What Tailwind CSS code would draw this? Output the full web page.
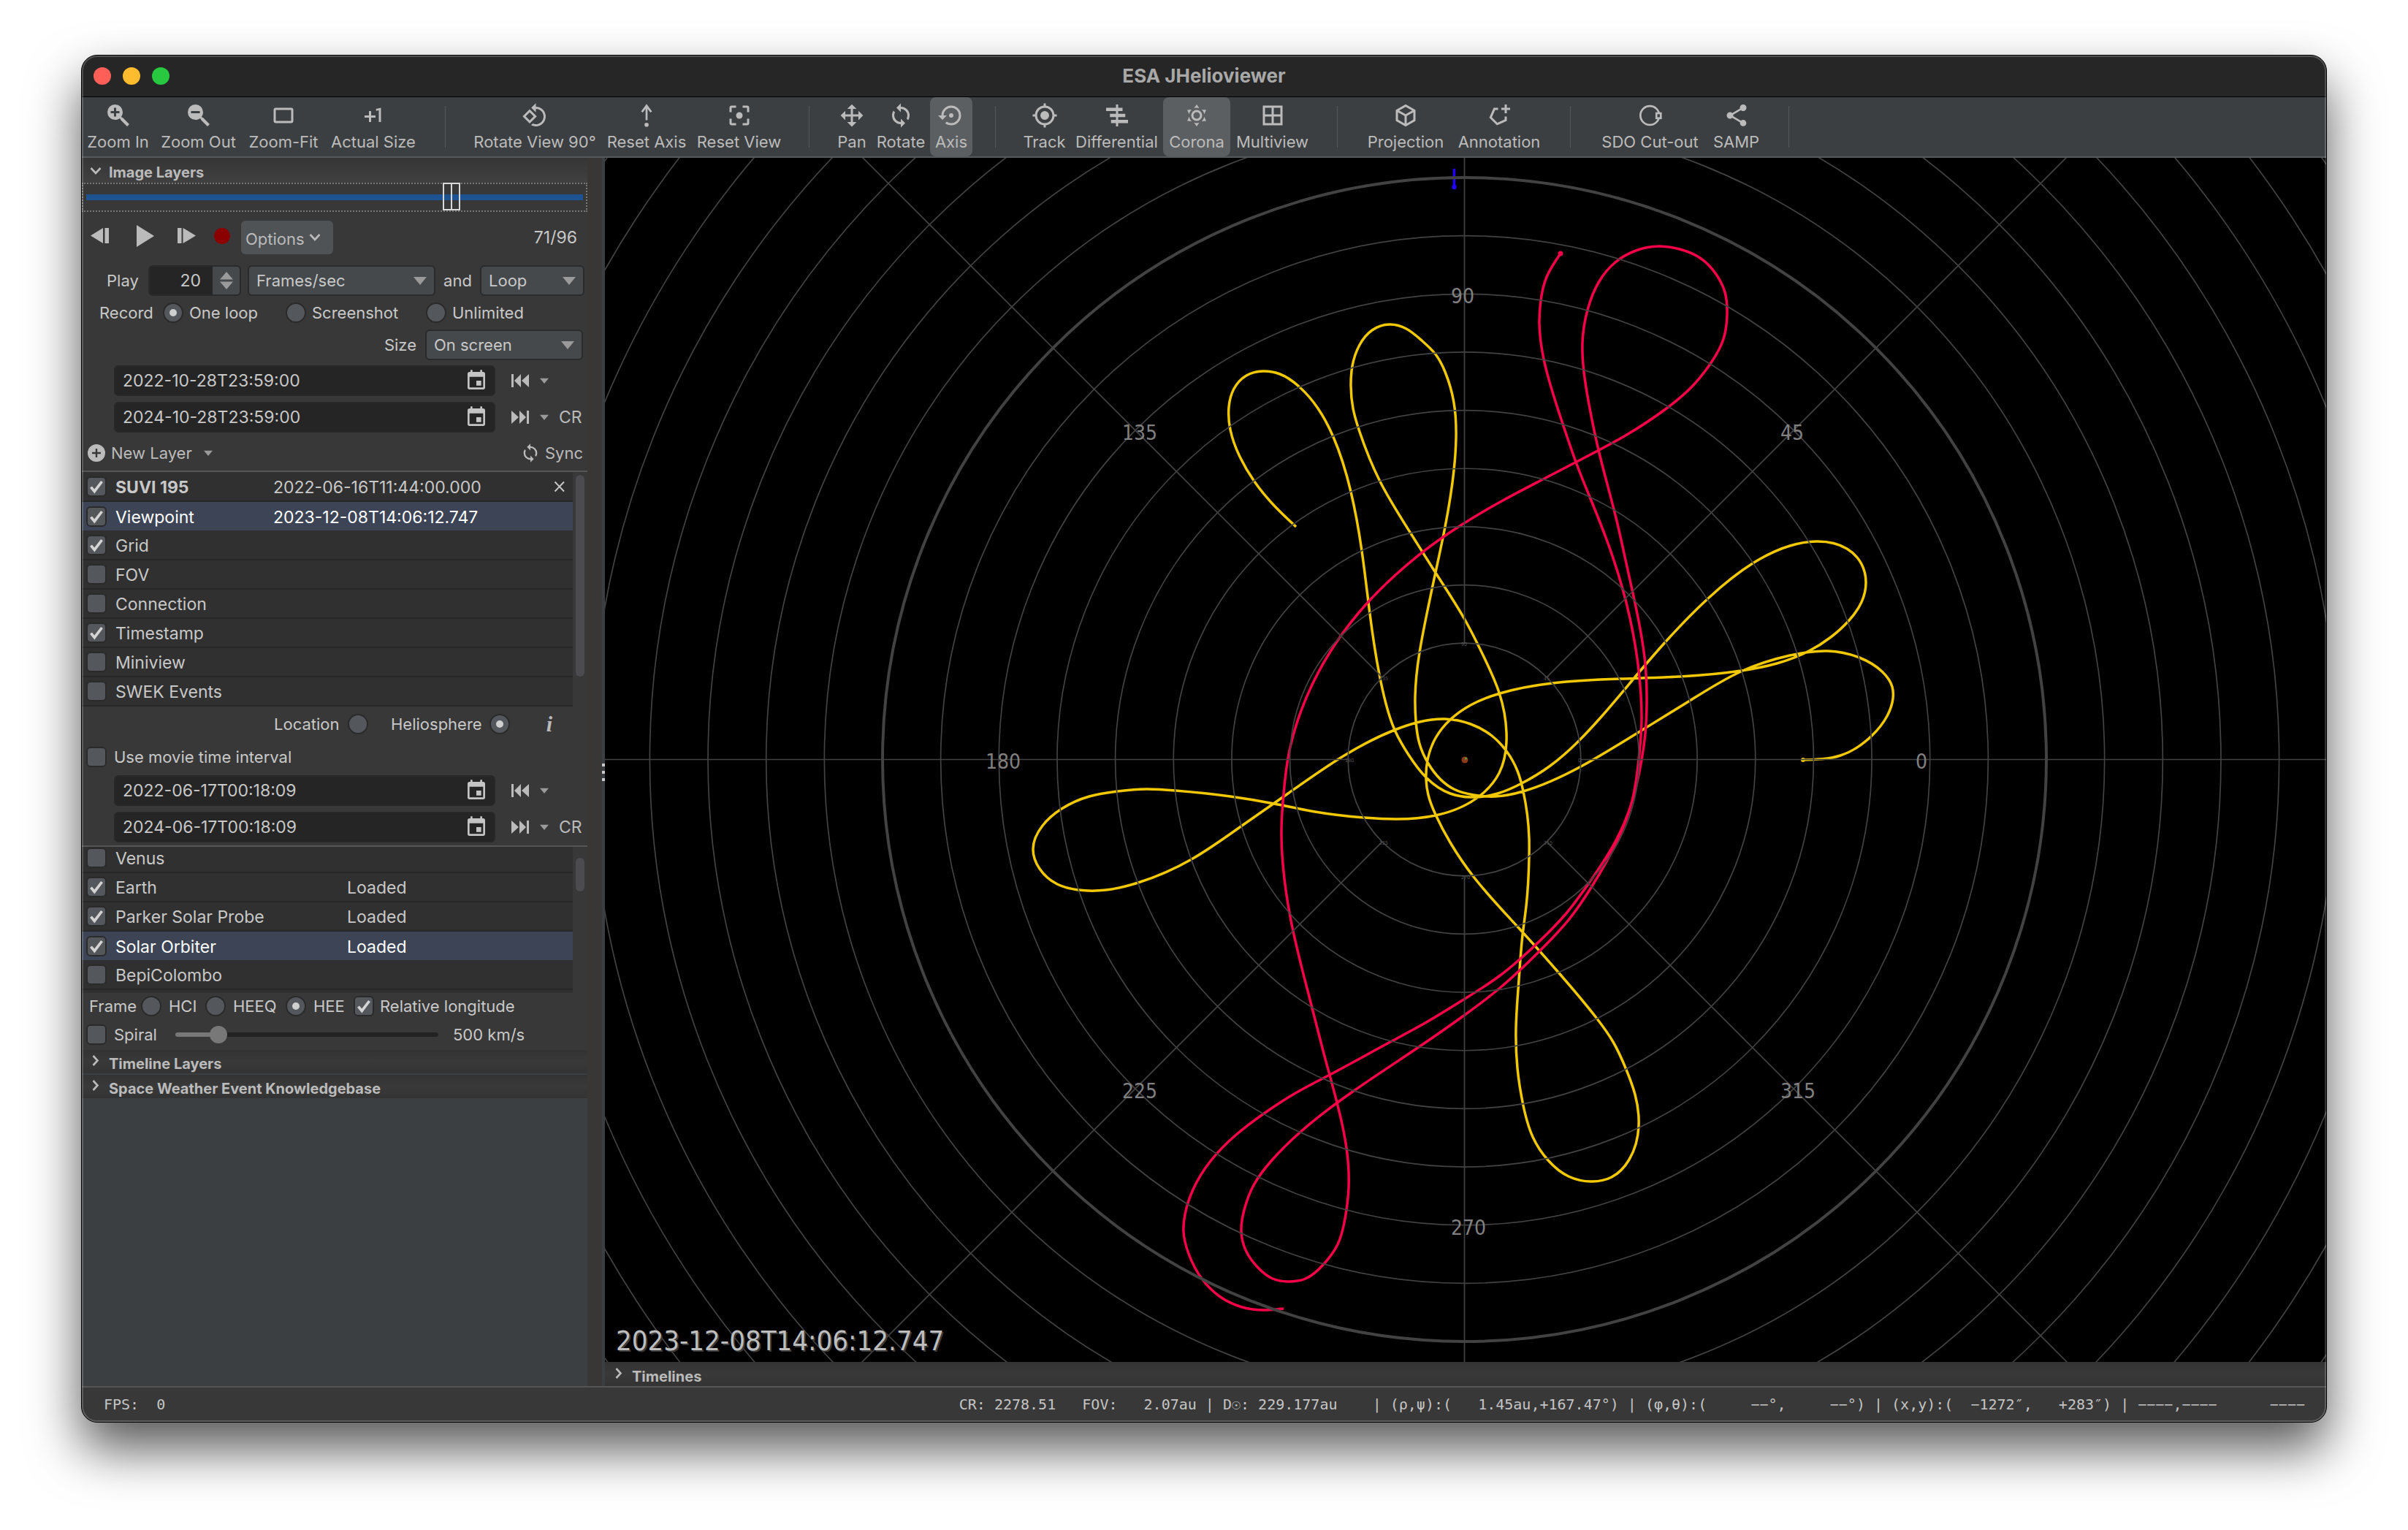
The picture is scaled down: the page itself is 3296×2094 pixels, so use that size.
<!DOCTYPE html>
<html lang="en">
<head>
<meta charset="utf-8">
<title>ESA JHelioviewer</title>
<script src="https://cdn.jsdelivr.net/npm/@tailwindcss/browser@4"></script>
</head>
<body class="flex h-screen flex-col bg-white px-[111px] pt-[75px] pb-[147px] font-['Inter','Liberation_Sans',sans-serif] text-[22px] leading-7 text-[#bbbbbb]">

<!-- shared symbols -->
<svg class="hidden" aria-hidden="true">
  <symbol id="check" viewBox="0 0 26 26"><path d="M6 13.5 L10.5 19 L20 6.5" fill="none" stroke="#d4d4d4" stroke-width="3.4"/></symbol>
  <symbol id="tri" viewBox="0 0 18 12"><path d="M0 1H18L9 12Z" fill="#9a9a9a"/></symbol>
  <symbol id="cal" viewBox="0 0 24 24"><path fill="#c4c4c4" d="M19,19H5V8H19M16,1V3H8V1H6V3H5C3.89,3 3,3.89 3,5V19A2,2 0 0,0 5,21H19A2,2 0 0,0 21,19V5C21,3.89 20.1,3 19,3H18V1M17,12H12V17H17V12Z"/></symbol>
  <symbol id="first" viewBox="0 0 24 20"><path fill="#bbbbbb" d="M0 1h3v18H0zM13 1v18L4 10zM24 1v18L14 10z"/></symbol>
  <symbol id="last" viewBox="0 0 24 20"><path fill="#bbbbbb" d="M21 1h3v18h-3zM11 1v18l9-9zM0 1v18l10-9z"/></symbol>
  <symbol id="sync" viewBox="0 0 24 24"><path fill="currentColor" d="M12,18A6,6 0 0,1 6,12C6,11 6.25,10.03 6.7,9.2L5.24,7.74C4.46,8.97 4,10.43 4,12A8,8 0 0,0 12,20V23L16,19L12,15M12,4V1L8,5L12,9V6A6,6 0 0,1 18,12C18,13 17.75,13.97 17.3,14.8L18.76,16.26C19.54,15.03 20,13.57 20,12A8,8 0 0,0 12,4Z"/></symbol>
  <symbol id="chev" viewBox="0 0 16 16"><path d="M4.500 1 L10.500 7.500 L4.500 14" fill="none" stroke="#bbbbbb" stroke-width="2.600"/></symbol>
  <symbol id="chevd" viewBox="0 0 16 16"><path d="M1.500 4 L8 11 L14.500 4" fill="none" stroke="#bbbbbb" stroke-width="2.600"/></symbol>
</svg>

<div class="relative flex min-h-0 flex-1 flex-col overflow-hidden rounded-[22px] border border-black bg-[#383838] shadow-[0_36px_70px_rgba(0,0,0,0.66)]">

  <!-- title bar -->
  <header class="relative flex h-[57px] shrink-0 items-center justify-center border-b border-black bg-[#262626]">
    <div class="absolute left-4 flex gap-4">
      <span class="size-6 rounded-full bg-[#ff5f57]"></span>
      <span class="size-6 rounded-full bg-[#febc2e]"></span>
      <span class="size-6 rounded-full bg-[#28c840]"></span>
    </div>
    <h1 class="text-[26px] font-bold text-[#a8a8a8]">ESA JHelioviewer</h1>
  </header>

  <!-- toolbar -->
  <nav class="flex h-[83px] shrink-0 items-stretch whitespace-nowrap border-b-2 border-[#555a5d] bg-[#3c3f41]">
    <button class="flex w-[99px] flex-col items-center pt-[7px]"><svg class="size-9" viewBox="0 0 24 24" fill="currentColor"><path d="M9,2A7,7 0 0,1 16,9C16,10.57 15.5,12 14.61,13.19L15.41,14H16L22,20L20,22L14,16V15.41L13.19,14.61C12,15.5 10.57,16 9,16A7,7 0 0,1 2,9A7,7 0 0,1 9,2M8,5V8H5V10H8V13H10V10H13V8H10V5H8Z"/></svg><span class="mt-1">Zoom In</span></button>
    <button class="flex w-[121px] flex-col items-center pt-[7px]"><svg class="size-9" viewBox="0 0 24 24" fill="currentColor"><path d="M9,2A7,7 0 0,1 16,9C16,10.57 15.5,12 14.61,13.19L15.41,14H16L22,20L20,22L14,16V15.41L13.19,14.61C12,15.5 10.57,16 9,16A7,7 0 0,1 2,9A7,7 0 0,1 9,2M5,8V10H13V8H5Z"/></svg><span class="mt-1">Zoom Out</span></button>
    <button class="flex w-[112px] flex-col items-center pt-[7px]"><svg class="size-9" viewBox="0 0 24 24" fill="none" stroke="currentColor" stroke-width="2"><rect x="4" y="6" width="16" height="12" rx="1"/></svg><span class="mt-1">Zoom-Fit</span></button>
    <button class="flex w-[134px] flex-col items-center pt-[7px]"><svg class="size-9" viewBox="0 0 24 24" fill="currentColor"><path d="M10,8V12H14V14H10V18H8V14H4V12H8V8H10M14.5,6.080V7.9L17,7.4V18H19V5L14.5,6.080Z"/></svg><span class="mt-1">Actual Size</span></button>
    <span class="mx-[31px] my-3 w-px bg-[#55585a]"></span>
    <button class="flex w-[182px] flex-col items-center pt-[7px]"><svg class="size-9" viewBox="0 0 24 24" fill="currentColor"><path d="M7.34 6.41L.86 12.9l6.49 6.48 6.49-6.48-6.5-6.49zM3.69 12.9l3.66-3.66L11 12.9l-3.66 3.66-3.65-3.66zm15.67-6.26C17.61 4.88 15.3 4 13 4V.76L8.76 5 13 9.24V6c1.79 0 3.58.68 4.95 2.05 2.73 2.73 2.73 7.17 0 9.9C16.58 19.32 14.79 20 13 20c-.97 0-1.94-.21-2.84-.61l-1.49 1.49C10.02 21.62 11.51 22 13 22c2.3 0 4.61-.88 6.36-2.64 3.52-3.51 3.52-9.21 0-12.72z"/></svg><span class="mt-1">Rotate View 90°</span></button>
    <button class="flex w-[124px] flex-col items-center pt-[7px]"><svg class="size-9" viewBox="0 0 24 24" fill="currentColor"><path d="M12 1.500 L17 8.300 L15.500 9.400 L12.900 6 V16.300 H11.100 V6 L8.500 9.400 L7 8.300Z"/><circle cx="12" cy="20.500" r="1.900"/></svg><span class="mt-1">Reset Axis</span></button>
    <button class="flex w-[129px] flex-col items-center pt-[7px]"><svg class="size-9" viewBox="0 0 24 24" fill="currentColor"><path d="M5,15H3V19A2,2 0 0,0 5,21H9V19H5M5,5H9V3H5A2,2 0 0,0 3,5V9H5M19,3H15V5H19V9H21V5A2,2 0 0,0 19,3M19,19H15V21H19A2,2 0 0,0 21,19V15H19"/><circle cx="12" cy="12" r="3"/></svg><span class="mt-1">Reset View</span></button>
    <span class="mx-[31px] my-3 w-px bg-[#55585a]"></span>
    <button class="flex w-[54px] flex-col items-center pt-[7px]"><svg class="size-9" viewBox="0 0 24 24" fill="currentColor"><path d="M13,6V11H18V7.75L22.25,12L18,16.25V13H13V18H16.25L12,22.25L7.75,18H11V13H6V16.25L1.75,12L6,7.75V11H11V6H7.75L12,1.75L16.25,6H13Z"/></svg><span class="mt-1">Pan</span></button>
    <button class="flex w-20 flex-col items-center pt-[7px]"><svg class="size-9"><use href="#sync"/></svg><span class="mt-1">Rotate</span></button>
    <button class="flex w-[58px] flex-col items-center rounded-lg bg-[#5c5f61] pt-[7px]"><svg class="size-9" viewBox="0 0 24 24" fill="currentColor"><path d="M12,3A9,9 0 0,0 3,12H0L4,16L8,12H5A7,7 0 0,1 12,5A7,7 0 0,1 19,12A7,7 0 0,1 12,19C10.5,19 9.09,18.5 7.94,17.7L6.5,19.14C8.04,20.3 9.94,21 12,21A9,9 0 0,0 21,12A9,9 0 0,0 12,3M14,12A2,2 0 0,0 12,10A2,2 0 0,0 10,12A2,2 0 0,0 12,14A2,2 0 0,0 14,12Z"/></svg><span class="mt-1">Axis</span></button>
    <span class="mx-[31px] my-3 w-px bg-[#55585a]"></span>
    <button class="flex w-[71px] flex-col items-center pt-[7px]"><svg class="size-9" viewBox="0 0 24 24" fill="currentColor"><path d="M12,8A4,4 0 0,1 16,12A4,4 0 0,1 12,16A4,4 0 0,1 8,12A4,4 0 0,1 12,8M3.05,13H1V11H3.05C3.5,6.83 6.83,3.5 11,3.05V1H13V3.05C17.17,3.5 20.5,6.83 20.95,11H23V13H20.95C20.5,17.17 17.17,20.5 13,20.95V23H11V20.95C6.83,20.5 3.5,17.17 3.05,13M12,5A7,7 0 0,0 5,12A7,7 0 0,0 12,19A7,7 0 0,0 19,12A7,7 0 0,0 12,5Z"/></svg><span class="mt-1">Track</span></button>
    <button class="flex w-[127px] flex-col items-center pt-[7px]"><svg class="size-9" viewBox="0 0 24 24" fill="currentColor"><path d="M2 5h15v3H2zM5.500 10.500h14v3h-14zM6.500 16h15.500v3H6.500zM11 2h2v20h-2z"/></svg><span class="mt-1">Differential</span></button>
    <button class="flex w-[92px] flex-col items-center rounded-lg bg-[#5c5f61] pt-[7px]"><svg class="size-9" viewBox="0 0 24 24" fill="currentColor"><path d="M12,7A5,5 0 0,1 17,12A5,5 0 0,1 12,17A5,5 0 0,1 7,12A5,5 0 0,1 12,7M12,9A3,3 0 0,0 9,12A3,3 0 0,0 12,15A3,3 0 0,0 15,12A3,3 0 0,0 12,9M12,2L14.39,5.42C13.65,5.15 12.84,5 12,5C11.16,5 10.35,5.15 9.61,5.42L12,2M3.34,7L7.5,6.65C6.9,7.16 6.36,7.78 5.94,8.5C5.5,9.24 5.25,10 5.11,10.79L3.34,7M3.36,17L5.12,13.23C5.26,14 5.53,14.78 5.95,15.5C6.37,16.24 6.91,16.86 7.5,17.37L3.36,17M20.65,7L18.88,10.79C18.74,10 18.47,9.23 18.05,8.5C17.63,7.78 17.1,7.15 16.5,6.64L20.65,7M20.64,17L16.5,17.36C17.09,16.85 17.62,16.22 18.04,15.5C18.46,14.77 18.73,14 18.87,13.21L20.64,17M12,22L9.59,18.56C10.33,18.83 11.14,19 12,19C12.82,19 13.63,18.83 14.37,18.56L12,22Z"/></svg><span class="mt-1">Corona</span></button>
    <button class="flex w-[115px] flex-col items-center pt-[7px]"><svg class="size-9" viewBox="0 0 24 24" fill="none" stroke="currentColor" stroke-width="2"><path d="M4 4H20V20H4ZM12 4V20M4 12H20"/></svg><span class="mt-1">Multiview</span></button>
    <span class="mx-[31px] my-3 w-px bg-[#55585a]"></span>
    <button class="flex w-[124px] flex-col items-center pt-[7px]"><svg class="size-9" viewBox="0 0 24 24" fill="currentColor"><path d="M21,16.5C21,16.88 20.79,17.21 20.47,17.38L12.57,21.82C12.41,21.94 12.21,22 12,22C11.79,22 11.59,21.94 11.43,21.82L3.53,17.38C3.21,17.21 3,16.88 3,16.5V7.5C3,7.12 3.21,6.79 3.53,6.62L11.43,2.18C11.59,2.06 11.79,2 12,2C12.21,2 12.41,2.06 12.57,2.18L20.47,6.62C20.79,6.79 21,7.12 21,7.5V16.5M12,4.15L6.04,7.5L12,10.85L17.96,7.5L12,4.15M5,15.91L11,19.29V12.58L5,9.21V15.91M19,15.91V9.21L13,12.58V19.29L19,15.91Z"/></svg><span class="mt-1">Projection</span></button>
    <button class="flex w-[132px] flex-col items-center pt-[7px]"><svg class="size-9" viewBox="0 0 24 24" fill="currentColor"><path d="M17,15.7V13H19V17L10,21L3,14L7,5H11V7H8.3L5.4,13.6L10.4,18.6L17,15.7M22,5V7H19V10H17V7H14V5H17V2H19V5H22Z"/></svg><span class="mt-1">Annotation</span></button>
    <span class="mx-[31px] my-3 w-px bg-[#55585a]"></span>
    <button class="flex w-[155px] flex-col items-center pt-[7px]"><svg class="size-9" viewBox="0 0 24 24" fill="none" stroke="currentColor" stroke-width="1.800"><circle cx="11.500" cy="12" r="8.600"/><rect x="17.500" y="10" width="4" height="4.500" fill="#3c3f41"/></svg><span class="mt-1">SDO Cut-out</span></button>
    <button class="flex w-[81px] flex-col items-center pt-[7px]"><svg class="size-9" viewBox="0 0 24 24" fill="currentColor"><path d="M18,16.08C17.24,16.08 16.56,16.38 16.04,16.85L8.91,12.7C8.96,12.47 9,12.24 9,12C9,11.76 8.96,11.53 8.91,11.3L15.96,7.19C16.5,7.69 17.21,8 18,8A3,3 0 0,0 21,5A3,3 0 0,0 18,2A3,3 0 0,0 15,5C15,5.24 15.04,5.47 15.09,5.7L8.04,9.81C7.5,9.31 6.79,9 6,9A3,3 0 0,0 3,12A3,3 0 0,0 6,15C6.79,15 7.5,14.69 8.04,14.19L15.16,18.34C15.11,18.55 15.08,18.77 15.08,19C15.08,20.61 16.39,21.91 18,21.91C19.61,21.91 20.92,20.61 20.92,19A2.92,2.92 0 0,0 18,16.08Z"/></svg><span class="mt-1">SAMP</span></button>
    <span class="mx-[31px] my-3 w-px bg-[#55585a]"></span>
  </nav>

  <main class="flex min-h-0 flex-1">

    <!-- control panel -->
    <aside class="flex w-[692px] shrink-0 flex-col bg-[#3c3f41] text-[#c8c8c8]">
      <div class="bg-[#383838]">
        <h2 class="flex h-[34px] items-center bg-linear-to-b from-[#363636] to-[#404040] pt-1.5 text-[20px] font-bold text-[#bbbbbb]"><svg class="mb-1 ml-[11px] size-4"><use href="#chevd"/></svg><button class="ml-2.5">Image Layers</button></h2>

        <div class="relative flex h-10 items-center border-2 border-dotted border-[#777] px-1">
          <span class="h-2 w-full bg-[#1d5391]"></span>
          <span class="absolute -top-0.5 left-[71.500%] flex h-[38px] w-6 justify-center border-2 border-[#d8d8d8]"><span class="w-0.5 bg-[#d8d8d8]"></span></span>
        </div>

        <div class="flex h-[70px] items-center">
          <button aria-label="Previous frame" class="mb-1 ml-3"><svg class="h-6 w-[26px]" viewBox="0 0 26 24" fill="#bbbbbb"><path d="M17 1v21L0 11.500zM19.500 1H25v21h-5.500z"/></svg></button>
          <button aria-label="Play" class="mb-1 ml-[37px]"><svg class="h-8 w-6" viewBox="0 0 24 32" fill="#bbbbbb"><path d="M0 1V31L24 16z"/></svg></button>
          <button aria-label="Next frame" class="mb-1 ml-8"><svg class="h-6 w-[26px]" viewBox="0 0 26 24" fill="#bbbbbb"><path d="M7.500 1v21L25 11.500zM0 1h5.500v21H0z"/></svg></button>
          <button aria-label="Record" class="mb-1 ml-6 size-[22px] rounded-full bg-[#8b0000]"></button>
          <button class="ml-[15px] flex h-[46px] w-[126px] items-center gap-1.5 rounded-md bg-[#4f5356] pl-1.5 text-[#bbbbbb]"><span class="pt-1">Options</span><svg class="size-4"><use href="#chevd"/></svg></button>
          <span class="ml-auto mr-3.5 text-[23px]">71/96</span>
        </div>

        <div class="flex h-12 items-center">
          <label for="speed" class="w-[91px] pl-[34px]">Play</label>
          <div class="flex h-[42px] w-[127px] overflow-hidden rounded-md border-2 border-[#2a2a2a] bg-[#252525]">
            <input id="speed" value="20" class="w-[86px] bg-[#252525] pr-4 text-right text-[23px]">
            <span class="flex flex-1 items-center justify-center bg-[#45494b]"><svg class="h-6 w-[18px]" viewBox="0 0 18 24" fill="#9a9a9a"><path d="M9 0L18 10.500H0zM0 13.500H18L9 24z"/></svg></span>
          </div>
          <div class="ml-[9px] grid w-[257px] items-center"><select aria-label="Play unit" class="col-start-1 row-start-1 h-[42px] appearance-none rounded-md border-2 border-[#2a2a2a] bg-[#45494b] pl-2.5"><option>Frames/sec</option></select><svg class="col-start-1 row-start-1 mr-3 h-3 w-[18px] justify-self-end"><use href="#tri"/></svg></div>
          <span class="w-[61px] text-center">and</span>
          <div class="grid w-[143px] items-center"><select aria-label="Play mode" class="col-start-1 row-start-1 h-[42px] appearance-none rounded-md border-2 border-[#2a2a2a] bg-[#45494b] pl-2.5"><option>Loop</option></select><svg class="col-start-1 row-start-1 mr-3 h-3 w-[18px] justify-self-end"><use href="#tri"/></svg></div>
        </div>

        <div class="flex h-10 items-center">
          <span class="w-[111px] pl-6">Record</span>
          <label class="flex w-[168px] items-center gap-2"><input type="radio" name="rec" checked class="grid size-7 appearance-none place-items-center rounded-full border-2 border-[#2a2a2a] bg-[#54585d] checked:before:size-2.5 checked:before:rounded-full checked:before:bg-[#cfcfcf]">One loop</label>
          <label class="flex w-48 items-center gap-2"><input type="radio" name="rec" class="size-7 appearance-none rounded-full border-2 border-[#2a2a2a] bg-[#54585d]">Screenshot</label>
          <label class="flex items-center gap-2"><input type="radio" name="rec" class="size-7 appearance-none rounded-full border-2 border-[#2a2a2a] bg-[#54585d]">Unlimited</label>
        </div>

        <div class="flex h-12 items-center justify-end pr-1.5">
          <label for="size" class="pr-3">Size</label>
          <div class="grid w-[216px] items-center"><select id="size" class="col-start-1 row-start-1 h-[42px] appearance-none rounded-md border-2 border-[#2a2a2a] bg-[#45494b] pl-2.5"><option>On screen</option></select><svg class="col-start-1 row-start-1 mr-3 h-3 w-[18px] justify-self-end"><use href="#tri"/></svg></div>
        </div>

        <div class="flex h-[50px] items-center pl-11">
          <div class="flex h-[42px] w-[522px] items-center rounded-md border-2 border-[#282828] bg-[#252525] pr-2 pl-2.5"><input aria-label="Start time" value="2022-10-28T23:59:00" class="min-w-0 flex-1 bg-[#252525] text-[23px]"><svg class="size-8"><use href="#cal"/></svg></div>
          <button aria-label="Earlier" class="ml-[22px] flex items-center gap-[15px]"><svg class="h-5 w-6"><use href="#first"/></svg><svg class="h-2 w-3"><use href="#tri"/></svg></button>
        </div>
        <div class="flex h-[50px] items-center pl-11">
          <div class="flex h-[42px] w-[522px] items-center rounded-md border-2 border-[#282828] bg-[#252525] pr-2 pl-2.5"><input aria-label="End time" value="2024-10-28T23:59:00" class="min-w-0 flex-1 bg-[#252525] text-[23px]"><svg class="size-8"><use href="#cal"/></svg></div>
          <button aria-label="Later" class="ml-[22px] flex items-center gap-[15px]"><svg class="h-5 w-6"><use href="#last"/></svg><svg class="h-2 w-3"><use href="#tri"/></svg></button>
          <button class="ml-3.5 text-[23px] text-[#bbbbbb]">CR</button>
        </div>

        <div class="flex h-[50px] items-center border-b-2 border-[#555555] pr-1.5 pl-2 text-[#bbbbbb]">
          <button class="flex items-center gap-2"><svg class="size-6" viewBox="0 0 24 24"><circle cx="12" cy="12" r="12" fill="#bbbbbb"/><path d="M6 12h12M12 6v12" stroke="#383838" stroke-width="2.400"/></svg>New Layer<svg class="ml-2 h-2 w-3"><use href="#tri"/></svg></button>
          <button class="ml-auto flex items-center gap-1.5"><svg class="size-7"><use href="#sync"/></svg>Sync</button>
        </div>

        <!-- image layers -->
        <div class="flex">
          <table class="w-[672px] table-fixed bg-[#303030]">
            <colgroup><col class="w-[46px]"><col class="w-[216px]"><col><col class="w-9"></colgroup>
            <tbody id="layers"></tbody>
          </table>
          <span class="mt-1 ml-1 h-[276px] w-3 rounded-full bg-[#4b4b50]"></span>
        </div>

        <div class="flex h-12 items-center pl-[263px]">
          <label class="flex w-40 items-center gap-3">Location<input type="radio" name="vp" class="size-7 appearance-none rounded-full border-2 border-[#2a2a2a] bg-[#54585d]"></label>
          <label class="flex items-center gap-2.5">Heliosphere<input type="radio" name="vp" checked class="grid size-7 appearance-none place-items-center rounded-full border-2 border-[#2a2a2a] bg-[#54585d] checked:before:size-2.5 checked:before:rounded-full checked:before:bg-[#cfcfcf]"></label>
          <button aria-label="Info" class="ml-[50px] font-['Liberation_Serif',serif] text-[30px] font-bold italic text-[#bbbbbb]">i</button>
        </div>

        <label class="flex h-[42px] items-center pl-1.5"><input type="checkbox" class="size-7 appearance-none rounded-md border-2 border-[#2a2a2a] bg-[#54585d]"><span class="ml-2.5">Use movie time interval</span></label>

        <div class="flex h-[50px] items-center pl-11">
          <div class="flex h-[42px] w-[522px] items-center rounded-md border-2 border-[#282828] bg-[#252525] pr-2 pl-2.5"><input aria-label="Viewpoint start" value="2022-06-17T00:18:09" class="min-w-0 flex-1 bg-[#252525] text-[23px]"><svg class="size-8"><use href="#cal"/></svg></div>
          <button aria-label="Earlier" class="ml-[22px] flex items-center gap-[15px]"><svg class="h-5 w-6"><use href="#first"/></svg><svg class="h-2 w-3"><use href="#tri"/></svg></button>
        </div>
        <div class="flex h-[52px] items-center border-b-2 border-[#555555] pl-11">
          <div class="flex h-[42px] w-[522px] items-center rounded-md border-2 border-[#282828] bg-[#252525] pr-2 pl-2.5"><input aria-label="Viewpoint end" value="2024-06-17T00:18:09" class="min-w-0 flex-1 bg-[#252525] text-[23px]"><svg class="size-8"><use href="#cal"/></svg></div>
          <button aria-label="Later" class="ml-[22px] flex items-center gap-[15px]"><svg class="h-5 w-6"><use href="#last"/></svg><svg class="h-2 w-3"><use href="#tri"/></svg></button>
          <button class="ml-3.5 text-[23px] text-[#bbbbbb]">CR</button>
        </div>

        <!-- objects, scrolled slightly past the first row -->
        <div class="flex h-[200px] overflow-hidden">
          <div class="flex h-[200px] w-[672px] flex-col justify-end overflow-hidden bg-[#303030] pb-1">
            <table class="w-full table-fixed">
              <colgroup><col class="w-[46px]"><col class="w-[317px]"><col><col class="w-9"></colgroup>
              <tbody id="objects"></tbody>
            </table>
          </div>
          <span class="mt-[15px] ml-1 h-[46px] w-3 rounded-full bg-[#4b4b50]"></span>
        </div>

        <div class="flex h-9 items-center pl-2.5">
          <span class="w-[71px]">Frame</span>
          <label class="flex w-22 items-center gap-2.5"><input type="radio" name="frame" class="size-7 appearance-none rounded-full border-2 border-[#2a2a2a] bg-[#54585d]">HCI</label>
          <label class="flex w-[110px] items-center gap-2.5"><input type="radio" name="frame" class="size-7 appearance-none rounded-full border-2 border-[#2a2a2a] bg-[#54585d]">HEEQ</label>
          <label class="flex w-[93px] items-center gap-2.5"><input type="radio" name="frame" checked class="grid size-7 appearance-none place-items-center rounded-full border-2 border-[#2a2a2a] bg-[#54585d] checked:before:size-2.5 checked:before:rounded-full checked:before:bg-[#cfcfcf]">HEE</label>
          <label class="flex items-center gap-2"><span class="grid"><input type="checkbox" checked class="col-start-1 row-start-1 size-7 appearance-none rounded-md border-2 border-[#2a2a2a] bg-[#54585d]"><svg class="col-start-1 row-start-1 size-7"><use href="#check"/></svg></span>Relative longitude</label>
        </div>

        <div class="flex h-[42px] items-center pl-1.5">
          <label class="flex w-[122px] items-center gap-2.5"><input type="checkbox" class="size-7 appearance-none rounded-md border-2 border-[#2a2a2a] bg-[#54585d]">Spiral</label>
          <input type="range" aria-label="Wind speed" min="0" max="100" value="14" class="h-1.5 w-[360px] appearance-none rounded-full bg-linear-to-r from-[#777777] from-[60px] to-[#222222] to-[60px] [&::-webkit-slider-thumb]:size-6 [&::-webkit-slider-thumb]:appearance-none [&::-webkit-slider-thumb]:rounded-full [&::-webkit-slider-thumb]:bg-[#777877]">
          <span class="ml-5">500 km/s</span>
        </div>

        <h2 class="flex h-[34px] items-center border-b-2 border-[#3c3f41] bg-linear-to-b from-[#333333] via-[#393939] to-[#333333] pt-1.5 text-[20px] font-bold text-[#bbbbbb]"><svg class="mb-2 ml-[11px] size-4"><use href="#chev"/></svg><button class="ml-2.5">Timeline Layers</button></h2>
        <h2 class="flex h-8 items-center bg-linear-to-b from-[#333333] via-[#393939] to-[#333333] pt-1.5 text-[20px] font-bold text-[#bbbbbb]"><svg class="mb-2 ml-[11px] size-4"><use href="#chev"/></svg><button class="ml-2.5">Space Weather Event Knowledgebase</button></h2>
      </div>
    </aside>

    <!-- splitter -->
    <div class="flex w-6 shrink-0 flex-col items-end justify-center gap-1.5 border-r-4 border-[#3c3f41] bg-[#383736]">
      <span class="-mr-1 size-1 bg-[#c8c8c8]"></span>
      <span class="-mr-1 size-1 bg-[#c8c8c8]"></span>
      <span class="-mr-1 size-1 bg-[#c8c8c8]"></span>
    </div>

    <!-- orbit view -->
    <section class="flex min-w-0 flex-1 flex-col">
      <svg class="min-h-0 w-full flex-1 bg-black" viewBox="828 216 2356 1648" preserveAspectRatio="xMidYMid slice" role="img" aria-label="Heliosphere view">
        <g fill="none" stroke-width="3.500" stroke-linejoin="round">
          <path id="parker" stroke="#f2c800"/>
          <path id="orbiter" stroke="#f50049"/>
        </g>
        <circle cx="2136" cy="347" r="3.500" fill="#f50049"/>
        <circle cx="2468" cy="1040" r="3" fill="#f2c800"/>
        <g stroke="#2000ff" fill="#2000ff" stroke-width="3.500"><path d="M1990.500 231V256"/><circle cx="1990.500" cy="256" r="1.500"/></g>
        <circle cx="2005" cy="1040" r="4.500" fill="#8a3a18"/><circle cx="2006.500" cy="1038" r="1.600" fill="#5f9a3a"/>
        <g id="grid" fill="none" stroke="#424242" stroke-width="1.700"></g>
        <g id="marks" text-anchor="middle" class="font-['DejaVu_Sans_Condensed','DejaVu_Sans',sans-serif]" fill="#808080"></g>
        <text x="845" y="1850" class="font-['DejaVu_Sans_Condensed','DejaVu_Sans',sans-serif] text-[38px]" fill="#3a3a3a">2023-12-08T14:06:12.747</text>
        <text x="843" y="1848" class="font-['DejaVu_Sans_Condensed','DejaVu_Sans',sans-serif] text-[38px]" fill="#bdbdbd">2023-12-08T14:06:12.747</text>
      </svg>
      <h2 class="flex h-[33px] shrink-0 items-center bg-linear-to-b from-[#333333] via-[#393939] to-[#333333] pt-1.5 text-[20px] font-bold text-[#bbbbbb]"><svg class="mb-2 ml-[11px] size-4"><use href="#chev"/></svg><button class="ml-2.5">Timelines</button></h2>
    </section>
  </main>

  <footer class="flex h-[49px] shrink-0 items-center justify-between whitespace-pre border-t-2 border-[#555555] bg-[#383838] pr-[29px] pb-0.5 pl-[30px] font-['DejaVu_Sans_Mono',monospace] text-[20px] text-[#c4c4c4]"><span>FPS:  0</span><span>CR: 2278.51   FOV:   2.07au | D☉: 229.177au    | (ρ,ψ):(   1.45au,+167.47°) | (φ,θ):(     −−°,     −−°) | (x,y):(  −1272″,   +283″) | −−−−,−−−−      −−−−</span></footer>

  <!-- light rim of the window -->
  <div class="pointer-events-none absolute inset-0 rounded-[21px] border-2 border-white/20"></div>
</div>

<script>
const row = (name, on, value, opts = {}) => `
<tr class="h-10 ${opts.sel ? 'bg-[#3d4456] text-white' : 'border-b-2 border-[#272727]'}">
  <td class="p-0 pl-1.5"><span class="grid"><input type="checkbox" aria-label="${name}" ${on ? 'checked' : ''} class="col-start-1 row-start-1 size-7 appearance-none rounded-md border-2 border-[#2a2a2a] ${opts.sel ? 'bg-[#54575a]' : 'bg-[#54585d]'}">${on ? '<svg class="col-start-1 row-start-1 size-7"><use href="#check"/></svg>' : ''}</span></td>
  <td class="p-0 pt-0.5 text-[23px] ${opts.bold ? 'font-bold' : ''}">${name}</td>
  <td class="p-0 pt-0.5 text-[23px]">${value || ''}</td>
  <td class="p-0">${opts.close ? '<button aria-label="Remove layer" class="block"><svg class="ml-2.5 size-4" viewBox="0 0 16 16"><path d="M1.500 1.500L14 14.500M14 1.500L1.500 14.500" stroke="#c8c8c8" stroke-width="2"/></svg></button>' : ''}</td>
</tr>`;
document.getElementById('layers').innerHTML =
  row('SUVI 195', 1, '2022-06-16T11:44:00.000', {bold: 1, close: 1}) +
  row('Viewpoint', 1, '2023-12-08T14:06:12.747', {sel: 1}) +
  row('Grid', 1) + row('FOV', 0) + row('Connection', 0) + row('Timestamp', 1) + row('Miniview', 0) + row('SWEK Events', 0);
document.getElementById('objects').innerHTML =
  row('Venus', 0) + row('Earth', 1, 'Loaded') + row('Parker Solar Probe', 1, 'Loaded') + row('Solar Orbiter', 1, 'Loaded', {sel: 1}) + row('BepiColombo', 0);

// natural cubic spline, chord-length parametrised, through a flat list of x,y pairs
function spline(text) {
  const p = text.trim().split(/\s+/).map(s => s.split(',').map(Number)), n = p.length - 1;
  const h = [];
  for (let i = 0; i < n; i++) h.push(Math.hypot(p[i + 1][0] - p[i][0], p[i + 1][1] - p[i][1]) || 1);
  // second derivatives at the knots, by the tridiagonal algorithm
  const M = [0, 1].map(k => {
    const c = [0], d = [0], m = new Array(n + 1).fill(0);
    for (let i = 1; i < n; i++) {
      const r = 6 * ((p[i + 1][k] - p[i][k]) / h[i] - (p[i][k] - p[i - 1][k]) / h[i - 1]);
      const w = 2 * (h[i - 1] + h[i]) - h[i - 1] * c[i - 1];
      c.push(h[i] / w); d.push((r - h[i - 1] * d[i - 1]) / w);
    }
    for (let i = n - 1; i > 0; i--) m[i] = d[i] - c[i] * m[i + 1];
    return m;
  });
  let out = `M${p[0]}`;
  for (let i = 0; i < n; i++) {
    const a = [], b = [];
    for (const k of [0, 1]) {
      const s = (p[i + 1][k] - p[i][k]) / h[i];
      a.push(p[i][k] + (s - h[i] * (2 * M[k][i] + M[k][i + 1]) / 6) * h[i] / 3);
      b.push(p[i + 1][k] - (s + h[i] * (M[k][i] + 2 * M[k][i + 1]) / 6) * h[i] / 3);
    }
    out += `C${a} ${b} ${p[i + 1]}`;
  }
  return out;
}
document.getElementById('parker').setAttribute('d', spline(`
2468,1040 2519,1034 2562,1007 2583,980 2591,956 2590,940 2576,919 2545,900 2502,891 2450,897 2383,919 2313,959 2248,999 2164,1049
2085,1083 2047,1090 2017,1088 1990,1080 1955,1045 1943,1018 1938,987 1937,953 1943,893 1953,840 1962,797 1978,721 1990,644
1993,599 1990,551 1978,509 1965,485 1946,466 1925,450 1902,444 1878,452 1861,472 1851,501 1849,528 1852,559 1861,591 1889,659
1931,730 1967,787 2005,848 2032,901 2052,948 2062,1003 2052,1058 2027,1088 1965,1116 1910,1121 1867,1119
1800,1111 1744,1100 1684,1090 1609,1082 1569,1080 1530,1083 1491,1090 1453,1107 1427,1130 1414,1162 1423,1189 1447,1210 1476,1218
1514,1218 1558,1208 1631,1176 1700,1130 1763,1086 1840,1034 1909,999 1943,988 1978,984 2013,991 2042,1007 2062,1028 2077,1055
2085,1083 2093,1147 2093,1173 2089,1240 2084,1280 2079,1341 2075,1407 2077,1462 2085,1513 2098,1556 2119,1588 2147,1610
2179,1617 2206,1611 2230,1587 2243,1541 2238,1498 2226,1464 2208,1426 2185,1393 2135,1333 2076,1267 2017,1200 1985,1153 1965,1115
1955,1088 1952,1067 1954,1040 1965,1010 1985,985 2013,965 2053,949 2125,935 2218,929 2299,926 2383,918 2432,908 2476,891
2506,872 2531,849 2548,824 2554,797 2548,772 2528,751 2486,741 2450,747 2399,771 2338,819 2281,877 2241,923 2190,983 2162,1013
2122,1048 2083,1072 2050,1086 2013,1091 1985,1086 1952,1064 1928,1033 1909,999 1897,963 1888,923 1875,840 1864,754 1849,673
1825,598 1804,559 1778,529 1752,512 1729,508 1706,514 1689,532 1682,557 1684,588 1697,625 1717,659 1745,693 1774,721`));
document.getElementById('orbiter').setAttribute('d', spline(`
2136,347 2117,379 2109,411 2107,443 2114,496 2139,580 2158,635 2178,685 2200,741 2221,806 2238,882 2246,951 2247,983 2243,1040
2234,1096 2214,1150 2179,1213 2147,1259 2109,1300 2052,1353 2005,1389 1942,1433 1853,1493 1778,1551 1740,1589 1716,1622
1703,1656 1699,1686 1706,1713 1722,1735 1742,1750 1763,1754 1787,1750 1812,1730 1831,1703 1841,1668 1846,1625 1843,1571 1830,1509
1811,1438 1793,1368 1767,1260 1756,1183 1754,1135 1757,1086 1764,1032 1774,993 1797,935 1832,875 1869,828 1910,787 1948,755
2001,718 2057,685 2110,657 2158,632 2225,596 2281,559 2317,528 2341,498 2359,464 2364,430 2361,400 2348,374 2327,353 2299,341
2271,337 2239,343 2211,359 2189,385 2173,424 2166,469 2168,509 2176,559 2189,620 2213,713 2226,771 2241,840 2252,909 2254,962
2252,1004 2247,1040 2233,1100 2212,1150 2176,1207 2143,1251 2101,1294 2052,1336 2005,1367 1949,1401 1903,1426 1820,1471
1775,1495 1730,1524 1692,1553 1657,1589 1633,1628 1622,1662 1620,1686 1627,1716 1645,1750 1669,1774 1700,1789 1732,1793 1757,1791`));

const cx = 2004.5, cy = 1039.5, unit = 79.65;
let g = '';
for (let k = 2; k < 19; k++) g += `<circle cx="${cx}" cy="${cy}" r="${k * unit}"${k === 10 ? ' stroke-width="4"' : ''}/>`;
for (let a = 0; a < 360; a += 45) {
  const c = Math.cos(a * Math.PI / 180), s = Math.sin(a * Math.PI / 180);
  g += `<path d="M${cx + 2 * unit * c} ${cy + 2 * unit * s}L${cx + 2200 * c} ${cy + 2200 * s}"/>`;
}
document.getElementById('grid').innerHTML = g;
document.getElementById('marks').innerHTML = [
  ['90', 2002, 405], ['45', 2453, 592], ['135', 1560, 592], ['180', 1373, 1042], ['0', 2630, 1042], ['225', 1560, 1493], ['315', 2461, 1493], ['270', 2010, 1680]
].map(([t, x, y]) => `<text x="${x}" y="${y + 10}" class="text-[28px]">${t}</text>`).join('') + [
  ['90', 2004, 881], ['45', 2117, 928], ['135', 1894, 928], ['180', 1847, 1040], ['0', 2162, 1040], ['225', 1894, 1153], ['315', 2119, 1153], ['270', 2006, 1200]
].map(([t, x, y]) => `<text x="${x}" y="${y + 3}" class="text-[7px]" fill="#555555">${t}</text>`).join('');
</script>
</body>
</html>
